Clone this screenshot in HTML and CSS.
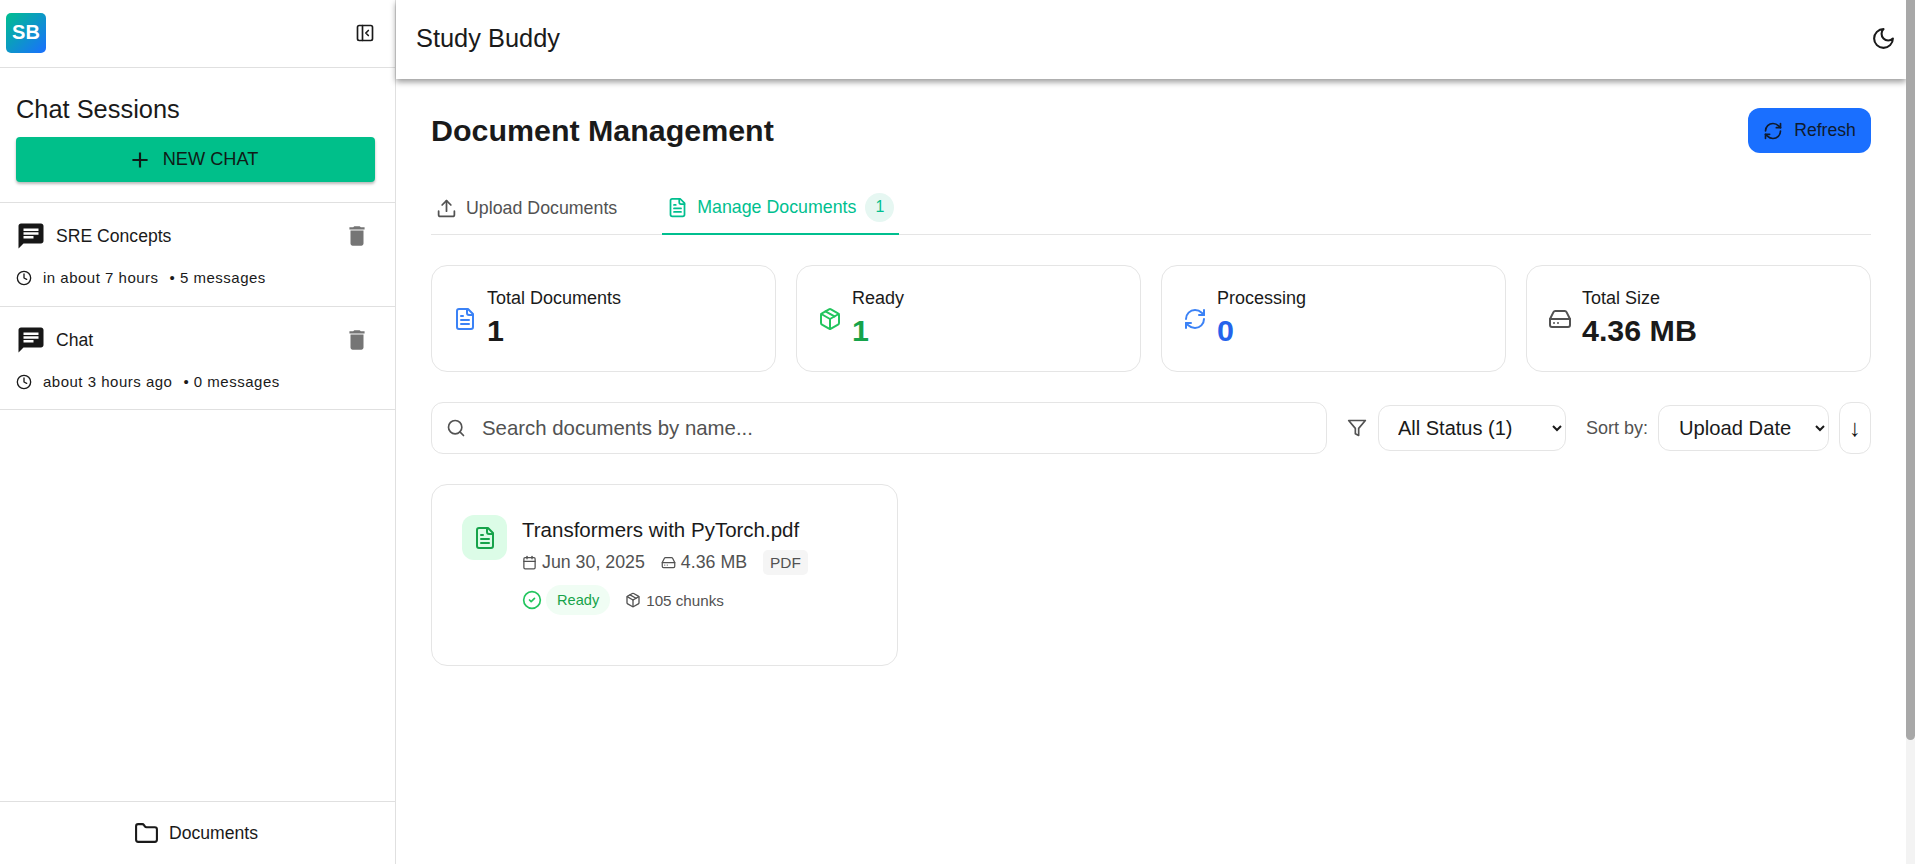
FILE: index.html
```html
<!DOCTYPE html>
<html>
<head>
    <title>Study Buddy</title>
    <link rel="stylesheet" href="styles.css">
</head>
<body>
    <svg class="sprite" xmlns="http://www.w3.org/2000/svg">
        <symbol id="i-file" viewBox="0 0 24 24"><path d="M15 2H6a2 2 0 0 0-2 2v16a2 2 0 0 0 2 2h12a2 2 0 0 0 2-2V7Z"/><path d="M14 2v4a2 2 0 0 0 2 2h4"/><path d="M10 9H8"/><path d="M16 13H8"/><path d="M16 17H8"/></symbol>
        <symbol id="i-upload" viewBox="0 0 24 24"><path d="M21 15v4a2 2 0 0 1-2 2H5a2 2 0 0 1-2-2v-4"/><polyline points="17 8 12 3 7 8"/><line x1="12" y1="3" x2="12" y2="15"/></symbol>
        <symbol id="i-package" viewBox="0 0 24 24"><path d="m7.5 4.27 9 5.15"/><path d="M21 8a2 2 0 0 0-1-1.73l-7-4a2 2 0 0 0-2 0l-7 4A2 2 0 0 0 3 8v8a2 2 0 0 0 1 1.73l7 4a2 2 0 0 0 2 0l7-4A2 2 0 0 0 21 16Z"/><path d="m3.3 7 8.7 5 8.7-5"/><path d="M12 22V12"/></symbol>
        <symbol id="i-refresh" viewBox="0 0 24 24"><path d="M3 12a9 9 0 0 1 9-9 9.75 9.75 0 0 1 6.74 2.74L21 8"/><path d="M21 3v5h-5"/><path d="M21 12a9 9 0 0 1-9 9 9.75 9.75 0 0 1-6.74-2.74L3 16"/><path d="M8 16H3v5"/></symbol>
        <symbol id="i-drive" viewBox="0 0 24 24"><line x1="22" y1="12" x2="2" y2="12"/><path d="M5.45 5.11 2 12v6a2 2 0 0 0 2 2h16a2 2 0 0 0 2-2v-6l-3.45-6.89A2 2 0 0 0 16.76 4H7.24a2 2 0 0 0-1.79 1.11z"/><line x1="6" y1="16" x2="6.01" y2="16"/><line x1="10" y1="16" x2="10.01" y2="16"/></symbol>
        <symbol id="i-chat" viewBox="0 0 24 24"><path class="solid" d="M20 2H4c-1.1 0-1.99.9-1.99 2L2 22l4-4h14c1.1 0 2-.9 2-2V4c0-1.1-.9-2-2-2zM6 9h12v2H6V9zm8 5H6v-2h8v2zm4-6H6V6h12v2z"/></symbol>
        <symbol id="i-trash" viewBox="0 0 24 24"><path class="solid" d="M6 19c0 1.1.9 2 2 2h8c1.1 0 2-.9 2-2V7H6v12zM19 4h-3.5l-1-1h-5l-1 1H5v2h14V4z"/></symbol>
        <symbol id="i-clock" viewBox="0 0 24 24"><circle cx="12" cy="12" r="10"/><polyline points="12 6 12 12 16 14"/></symbol>
    </svg>

    <div class="app">
        <aside class="sidebar">
            <div class="side-top">
                <div class="logo">SB</div>
                <svg class="icon collapse" viewBox="0 0 24 24"><rect x="3" y="3" width="18" height="18" rx="2"/><path d="M9 3v18"/><path d="m16 15-3-3 3-3"/></svg>
            </div>

            <div class="side-head">
                <h2>Chat Sessions</h2>
                <button type="button" class="new-chat">
                    <svg class="plus" viewBox="0 0 24 24"><path class="solid" d="M19 13h-6v6h-2v-6H5v-2h6V5h2v6h6v2z"/></svg>
                    NEW CHAT
                </button>
            </div>

            <div class="sessions">
                <div class="session">
                    <div class="session-row">
                        <svg class="chat-icon"><use href="#i-chat"/></svg>
                        <span class="session-name">SRE Concepts</span>
                        <svg class="trash"><use href="#i-trash"/></svg>
                    </div>
                    <div class="session-meta">
                        <svg class="icon clock"><use href="#i-clock"/></svg>
                        <span>in about 7 hours</span>
                        <span>• 5 messages</span>
                    </div>
                </div>
                <div class="session">
                    <div class="session-row">
                        <svg class="chat-icon"><use href="#i-chat"/></svg>
                        <span class="session-name">Chat</span>
                        <svg class="trash"><use href="#i-trash"/></svg>
                    </div>
                    <div class="session-meta">
                        <svg class="icon clock"><use href="#i-clock"/></svg>
                        <span>about 3 hours ago</span>
                        <span>• 0 messages</span>
                    </div>
                </div>
            </div>

            <div class="side-foot">
                <svg class="icon folder" viewBox="0 0 24 24"><path d="M20 20a2 2 0 0 0 2-2V8a2 2 0 0 0-2-2h-7.9a2 2 0 0 1-1.69-.9L9.6 3.9A2 2 0 0 0 7.93 3H4a2 2 0 0 0-2 2v13a2 2 0 0 0 2 2Z"/></svg>
                <span>Documents</span>
            </div>
        </aside>

        <div class="main">
            <header class="topbar">
                <span class="app-title">Study Buddy</span>
                <svg class="icon moon" viewBox="0 0 24 24"><path d="M12 3a6 6 0 0 0 9 9 9 9 0 1 1-9-9Z"/></svg>
            </header>

            <main class="content">
                <div class="page-head">
                    <h1>Document Management</h1>
                    <button type="button" class="refresh">
                        <svg class="icon refresh-icon"><use href="#i-refresh"/></svg>
                        Refresh
                    </button>
                </div>

                <div class="tabs">
                    <div class="tab">
                        <svg class="icon tab-icon"><use href="#i-upload"/></svg>
                        Upload Documents
                    </div>
                    <div class="tab active">
                        <svg class="icon tab-icon"><use href="#i-file"/></svg>
                        Manage Documents
                        <span class="tab-count">1</span>
                    </div>
                </div>

                <div class="stats">
                    <div class="stat">
                        <svg class="icon stat-icon blue"><use href="#i-file"/></svg>
                        <div class="stat-text">
                            <div class="stat-label">Total Documents</div>
                            <div class="stat-value">1</div>
                        </div>
                    </div>
                    <div class="stat">
                        <svg class="icon stat-icon green"><use href="#i-package"/></svg>
                        <div class="stat-text">
                            <div class="stat-label">Ready</div>
                            <div class="stat-value green-text">1</div>
                        </div>
                    </div>
                    <div class="stat">
                        <svg class="icon stat-icon blue"><use href="#i-refresh"/></svg>
                        <div class="stat-text">
                            <div class="stat-label">Processing</div>
                            <div class="stat-value blue-text">0</div>
                        </div>
                    </div>
                    <div class="stat">
                        <svg class="icon stat-icon grey"><use href="#i-drive"/></svg>
                        <div class="stat-text">
                            <div class="stat-label">Total Size</div>
                            <div class="stat-value">4.36 MB</div>
                        </div>
                    </div>
                </div>

                <div class="filters">
                    <div class="search">
                        <svg class="icon search-icon" viewBox="0 0 24 24"><circle cx="11" cy="11" r="8"/><path d="m21 21-4.3-4.3"/></svg>
                        <input type="text" placeholder="Search documents by name...">
                    </div>
                    <svg class="icon filter-icon" viewBox="0 0 24 24"><polygon points="22 3 2 3 10 12.46 10 19 14 21 14 12.46 22 3"/></svg>
                    <select class="status-select">
                        <option>All Status (1)</option>
                    </select>
                    <span class="sort-label">Sort by:</span>
                    <select class="sort-select">
                        <option>Upload Date</option>
                    </select>
                    <button type="button" class="sort-dir">↓</button>
                </div>

                <div class="doc-card">
                    <div class="doc-icon">
                        <svg class="icon"><use href="#i-file"/></svg>
                    </div>
                    <div class="doc-body">
                        <div class="doc-name">Transformers with PyTorch.pdf</div>
                        <div class="doc-meta">
                            <span class="meta-item">
                                <svg class="icon meta-icon" viewBox="0 0 24 24"><rect x="3" y="4" width="18" height="18" rx="2"/><line x1="16" y1="2" x2="16" y2="6"/><line x1="8" y1="2" x2="8" y2="6"/><line x1="3" y1="10" x2="21" y2="10"/></svg>
                                Jun 30, 2025
                            </span>
                            <span class="meta-item">
                                <svg class="icon meta-icon"><use href="#i-drive"/></svg>
                                4.36 MB
                            </span>
                            <span class="doc-type">PDF</span>
                        </div>
                        <div class="doc-status">
                            <svg class="icon check" viewBox="0 0 24 24"><circle cx="12" cy="12" r="10"/><path d="m9 12 2 2 4-4"/></svg>
                            <span class="status-pill">Ready</span>
                            <span class="chunks">
                                <svg class="icon chunk-icon"><use href="#i-package"/></svg>
                                105 chunks
                            </span>
                        </div>
                    </div>
                </div>
            </main>
        </div>

        <div class="scrollbar">
            <div class="scroll-thumb"></div>
        </div>
    </div>
</body>
</html>
```

FILE: styles.css
```css
* {
    box-sizing: border-box;
}

html, body {
    height: 100%;
    margin: 0;
    overflow: hidden;
}

body {
    background: #fff;
    color: #1a1a1a;
    font-family: "Liberation Sans", Arial, sans-serif;
}

.sprite {
    display: none;
}

.icon {
    fill: none;
    stroke: currentColor;
    stroke-width: 2;
    stroke-linecap: round;
    stroke-linejoin: round;
    flex-shrink: 0;
}

.solid {
    fill: currentColor;
    stroke: none;
}

.app {
    display: flex;
    height: 100vh;
}

/* sidebar */
.sidebar {
    width: 396px;
    flex-shrink: 0;
    display: flex;
    flex-direction: column;
    border-right: 1px solid #e0e0e0;
}

.side-top {
    height: 68px;
    display: flex;
    align-items: center;
    justify-content: space-between;
    padding: 0 20px 2px 6px;
    border-bottom: 1px solid #e0e0e0;
}

.logo {
    width: 40px;
    height: 40px;
    border-radius: 5px;
    background: linear-gradient(135deg, #00bf8f, #1a6fff);
    color: #fff;
    font-size: 20px;
    font-weight: 700;
    display: flex;
    align-items: center;
    justify-content: center;
}

.collapse {
    width: 20px;
    height: 20px;
}

.side-head {
    height: 135px;
    padding: 0 20px 0 16px;
    border-bottom: 1px solid #e0e0e0;
}

.side-head h2 {
    margin: 0;
    padding-top: 25px;
    font-size: 25.4px;
    line-height: 32px;
    font-weight: 400;
}

.new-chat {
    width: 100%;
    height: 45px;
    margin-top: 12px;
    display: flex;
    align-items: center;
    justify-content: center;
    gap: 10px;
    padding: 0 6px 0 0;
    border: none;
    border-radius: 4px;
    background: #00bf8a;
    color: #0f1b17;
    font-family: inherit;
    font-size: 18.2px;
    box-shadow: 0 2px 3px rgba(0, 0, 0, 0.28);
}

.plus {
    width: 26px;
    height: 26px;
}

.sessions {
    flex: 1;
}

.session {
    height: 103px;
    padding: 18px 20px 0 16px;
    border-bottom: 1px solid #e0e0e0;
}

.session:first-child {
    height: 104px;
}

.session-row {
    display: flex;
    align-items: center;
    height: 30px;
}

.chat-icon {
    width: 30px;
    height: 30px;
    margin-right: 10px;
    color: #171717;
}

.session-name {
    flex: 1;
    font-size: 17.6px;
}

.trash {
    width: 26px;
    height: 26px;
    margin-right: 5px;
    color: #757575;
}

.session-meta {
    display: flex;
    align-items: center;
    gap: 11px;
    margin-top: 18px;
    font-size: 15px;
    letter-spacing: 0.5px;
}

.clock {
    width: 16px;
    height: 16px;
}

.side-foot {
    height: 63px;
    display: flex;
    align-items: center;
    justify-content: center;
    gap: 10px;
    padding-right: 3px;
    border-top: 1px solid #e0e0e0;
    font-size: 17.6px;
}

.folder {
    width: 25px;
    height: 25px;
}

/* main column */
.main {
    flex: 1;
    min-width: 0;
    height: 100vh;
}

.scrollbar {
    width: 9px;
    flex-shrink: 0;
    background: #f3f3f3;
    position: relative;
    z-index: 2;
}

.scroll-thumb {
    height: 740px;
    background: #a8a8a8;
    border-radius: 0 0 5px 5px;
}

.topbar {
    position: relative;
    z-index: 1;
    height: 79px;
    display: flex;
    align-items: center;
    justify-content: space-between;
    padding: 0 10px 2px 20px;
    background: #fff;
    box-shadow: 0 3px 6px rgba(0, 0, 0, 0.4);
}

.app-title {
    font-size: 25.4px;
}

.moon {
    width: 25px;
    height: 25px;
}

.content {
    padding: 29px 35px 0;
}

.page-head {
    display: flex;
    align-items: center;
    justify-content: space-between;
    height: 45px;
}

h1 {
    margin: 0;
    font-size: 30.4px;
    font-weight: 700;
}

.refresh {
    width: 123px;
    height: 45px;
    display: flex;
    align-items: center;
    justify-content: center;
    gap: 11px;
    border: none;
    border-radius: 12px;
    background: #1a6fff;
    color: #0f1b2e;
    font-family: inherit;
    font-size: 17.6px;
}

.refresh-icon {
    width: 20px;
    height: 20px;
}

.tabs {
    display: flex;
    gap: 40px;
    height: 54px;
    margin-top: 28px;
    border-bottom: 1px solid #e5e5e5;
}

.tab {
    display: flex;
    align-items: center;
    gap: 9px;
    height: 54px;
    padding: 0 5px;
    color: #525252;
    font-size: 17.8px;
}

.tab.active {
    color: #00bf8f;
    border-bottom: 2px solid #00bf8f;
}

.tab-icon {
    width: 21px;
    height: 21px;
}

.tab-count {
    width: 29px;
    height: 29px;
    border-radius: 50%;
    background: #e6f7f2;
    font-size: 16px;
    display: flex;
    align-items: center;
    justify-content: center;
}

.stats {
    display: grid;
    grid-template-columns: repeat(4, 1fr);
    gap: 20px;
    margin-top: 30px;
}

.stat {
    height: 107px;
    display: flex;
    align-items: center;
    gap: 10px;
    padding: 0 21px;
    border: 1px solid #e5e5e5;
    border-radius: 16px;
}

.stat-icon {
    width: 24px;
    height: 24px;
}

.stat-text {
    padding-bottom: 3px;
}

.blue {
    color: #3b82f6;
}

.green {
    color: #22c55e;
}

.grey {
    color: #525252;
}

.stat-label {
    font-size: 18px;
    line-height: 24px;
}

.stat-value {
    margin-top: 2px;
    font-size: 30.4px;
    font-weight: 700;
    line-height: 36px;
}

.green-text {
    color: #16a34a;
}

.blue-text {
    color: #2563eb;
}

.filters {
    display: flex;
    align-items: center;
    margin-top: 30px;
    height: 52px;
}

.search {
    width: 896px;
    height: 52px;
    flex-shrink: 0;
    display: flex;
    align-items: center;
    gap: 16px;
    padding: 0 14px;
    border: 1px solid #e5e5e5;
    border-radius: 12px;
}

.search-icon {
    width: 20px;
    height: 20px;
    color: #525252;
}

.search input {
    flex: 1;
    padding: 0;
    border: none;
    outline: none;
    font-family: inherit;
    font-size: 20.4px;
}

.search input::placeholder {
    color: #525252;
    opacity: 1;
}

.filter-icon {
    width: 20px;
    height: 20px;
    margin-left: 20px;
    color: #525252;
}

select {
    height: 46px;
    flex-shrink: 0;
    border: 1px solid #e5e5e5;
    border-radius: 12px;
    background: #fff;
    color: #1a1a1a;
    font-family: inherit;
    padding: 0 15px;
}

.status-select {
    width: 188px;
    margin-left: 11px;
    font-size: 20px;
}

.sort-label {
    flex-shrink: 0;
    margin-left: 20px;
    color: #525252;
    font-size: 18px;
    white-space: nowrap;
}

.sort-select {
    width: 171px;
    margin-left: 10px;
    padding: 0 16px;
    font-size: 20.2px;
}

.sort-dir {
    width: 32px;
    height: 52px;
    flex-shrink: 0;
    margin-left: 10px;
    padding: 0;
    border: 1px solid #e5e5e5;
    border-radius: 12px;
    background: #fff;
    color: #1a1a1a;
    font-family: inherit;
    font-size: 24px;
}

.doc-card {
    width: 467px;
    height: 182px;
    margin-top: 30px;
    display: flex;
    gap: 15px;
    padding: 30px;
    border: 1px solid #e5e5e5;
    border-radius: 16px;
}

.doc-icon {
    width: 45px;
    height: 45px;
    flex-shrink: 0;
    display: flex;
    align-items: center;
    justify-content: center;
    border-radius: 12px;
    background: #dcfce7;
    color: #16a34a;
}

.doc-icon svg {
    width: 24px;
    height: 24px;
}

.doc-name {
    font-size: 20.5px;
    line-height: 30px;
}

.doc-meta {
    display: flex;
    align-items: center;
    gap: 16px;
    height: 25px;
    margin-top: 5px;
    color: #525252;
    font-size: 17.8px;
}

.meta-item {
    display: flex;
    align-items: center;
    gap: 5px;
}

.meta-icon {
    width: 15px;
    height: 15px;
}

.doc-type {
    padding: 0 7px;
    line-height: 25px;
    border-radius: 5px;
    background: #f5f5f5;
    font-size: 15.4px;
}

.doc-status {
    display: flex;
    align-items: center;
    margin-top: 10px;
}

.check {
    width: 20px;
    height: 20px;
    color: #22c55e;
}

.status-pill {
    height: 30px;
    margin-left: 4px;
    padding: 0 11px;
    display: flex;
    align-items: center;
    border-radius: 15px;
    background: #f0fdf4;
    color: #16a34a;
    font-size: 14.6px;
}

.chunks {
    display: flex;
    align-items: center;
    gap: 5px;
    margin-left: 15px;
    color: #525252;
    font-size: 15.2px;
}

.chunk-icon {
    width: 16px;
    height: 16px;
}
```
